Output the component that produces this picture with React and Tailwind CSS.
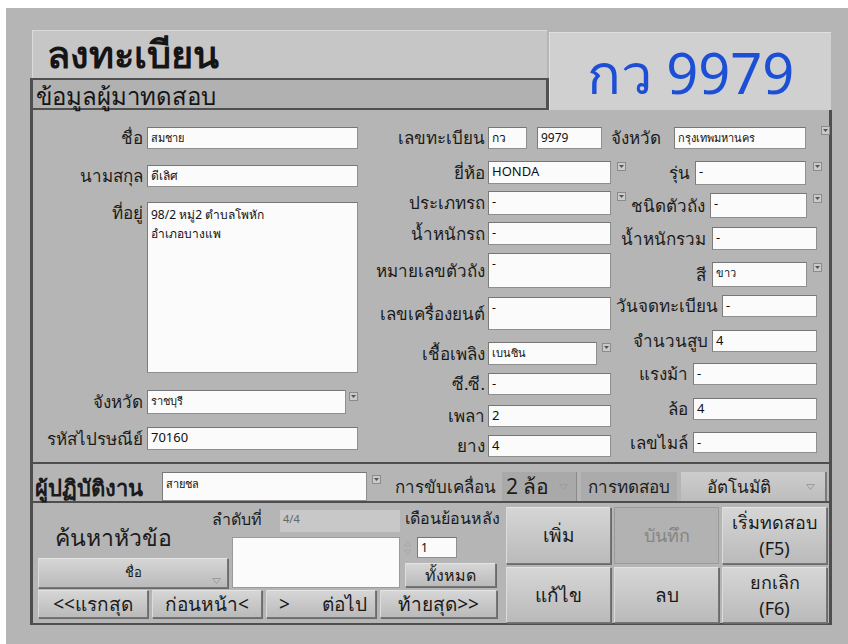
const ui = "font-['Noto_Sans','DejaVu_Sans',sans-serif]"

const boxCls =
  'shrink-0 h-full overflow-hidden whitespace-pre border border-[#8f8f8f] border-t-[#767676] border-l-[#7c7c7c] bg-[#fbfbfb] px-[3px] leading-[19px] text-[#111]'

const btnFace =
  'flex items-center border border-[#767676] border-t-[#e4e4e4] border-l-[#dcdcdc] bg-gradient-to-b from-[#d6d6d6] to-[#bababa] text-[#1a1a1a] shadow-[1px_1px_0_#6a6a6a]'
const btnCls = `${btnFace} justify-center`

// small square dropdown marker next to a text field
const Drop = ({ className = '' }) => (
  <span
    className={`flex h-[9px] w-[9px] shrink-0 items-center justify-center border border-[#8b8b8b] bg-[#cacaca] ${className}`}
  >
    <svg width="5" height="3" viewBox="0 0 5 3">
      <path d="M0 0h5L2.5 3z" fill="#555" />
    </svg>
  </span>
)

// thin down arrow used by the ring / enum controls
const Arrow = ({ className = '' }) => (
  <svg className={className} width="9" height="6" viewBox="0 0 9 6">
    <path d="M0.5 0.5h8L4.5 5.5z" fill="none" stroke="#9c9c9c" />
  </svg>
)

const LEFT = [
  { label: 'ชื่อ', value: 'สมชาย', row: 'mt-[17px] h-[22px] items-center', box: 'w-[211px]', v: 'text-[11px]' },
  { label: 'นามสกุล', value: 'ดีเลิศ', row: 'mt-[16px] h-[22px] items-center', box: 'w-[211px]', v: 'text-[12px]' },
  {
    label: 'ที่อยู่',
    value: '98/2 หมู่2 ตำบลโพหัก\nอำเภอบางแพ',
    row: 'mt-[15px] h-[171px] items-start',
    box: 'w-[211px]',
    v: 'text-[12px] leading-[16px] pt-[2px]',
  },
  {
    label: 'จังหวัด',
    value: 'ราชบุรี',
    row: 'mt-[17px] h-[24px] items-center',
    box: 'w-[199px]',
    v: 'text-[11px]',
    drop: 'ml-[3px] self-start mt-[2px]',
  },
  { label: 'รหัสไปรษณีย์', value: '70160', row: 'mt-[13px] h-[23px] items-center', box: 'w-[211px]' },
]

const MID = [
  {
    label: 'เลขทะเบียน',
    values: ['กว', '9979'],
    boxes: ['w-[39px]', 'w-[65px]'],
    row: 'mt-[17px] h-[22px] items-center',
    v: 'text-[12px]',
  },
  { label: 'ยี่ห้อ', value: 'HONDA', row: 'mt-[12px] h-[23px] items-center', box: 'w-[123px]', drop: 'ml-[6px] self-start mt-[1px]' },
  { label: 'ประเภทรถ', value: '-', row: 'mt-[7px] h-[24px] items-center', box: 'w-[123px]', drop: 'ml-[6px] self-start mt-[1px]' },
  { label: 'น้ำหนักรถ', value: '-', row: 'mt-[7px] h-[23px] items-center', box: 'w-[123px]' },
  { label: 'หมายเลขตัวถัง', value: '-', row: 'mt-[8px] h-[35px] items-center', box: 'w-[123px]', v: 'text-[12px] leading-[14px]' },
  { label: 'เลขเครื่องยนต์', value: '-', row: 'mt-[9px] h-[33px] items-center', box: 'w-[123px]', v: 'text-[12px] leading-[14px]' },
  {
    label: 'เชื้อเพลิง',
    value: 'เบนซิน',
    row: 'mt-[12px] h-[23px] items-center',
    box: 'w-[109px]',
    v: 'text-[11px]',
    drop: 'ml-[5px] self-start mt-[1px]',
  },
  { label: 'ซี.ซี.', value: '-', row: 'mt-[8px] h-[22px] items-center', box: 'w-[123px]' },
  { label: 'เพลา', value: '2', row: 'mt-[10px] h-[22px] items-center', box: 'w-[123px]' },
  { label: 'ยาง', value: '4', row: 'mt-[8px] h-[22px] items-center', box: 'w-[123px]' },
]

const RIGHT = [
  {
    label: 'จังหวัด',
    value: 'กรุงเทพมหานคร',
    row: 'mt-[17px] h-[22px] items-center',
    lab: 'w-[45px]',
    gap: 'ml-[18px]',
    box: 'w-[132px]',
    v: 'text-[11px]',
    drop: 'ml-[15px] self-start mt-[-1px]',
  },
  { label: 'รุ่น', value: '-', row: 'mt-[12px] h-[24px] items-center', lab: 'w-[79px]', gap: 'ml-[5px]', box: 'w-[111px]', drop: 'ml-[7px] self-start mt-[1px]' },
  { label: 'ชนิดตัวถัง', value: '-', row: 'mt-[8px] h-[25px] items-center', lab: 'w-[94px]', gap: 'ml-[5px]', box: 'w-[97px]', drop: 'ml-[6px] self-start mt-[1px]' },
  { label: 'น้ำหนักรวม', value: '-', row: 'mt-[9px] h-[23px] items-center', lab: 'w-[95px]', gap: 'ml-[6px]', box: 'w-[105px]' },
  {
    label: 'สี',
    value: 'ขาว',
    row: 'mt-[12px] h-[25px] items-center',
    lab: 'w-[95px]',
    gap: 'ml-[6px]',
    box: 'w-[95px]',
    v: 'text-[11px]',
    drop: 'ml-[6px] self-start mt-[1px]',
  },
  { label: 'วันจดทะเบียน', value: '-', row: 'mt-[8px] h-[22px] items-center', lab: 'w-[107px]', gap: 'ml-[4px]', box: 'w-[95px]' },
  { label: 'จำนวนสูบ', value: '4', row: 'mt-[13px] h-[22px] items-center', lab: 'w-[97px]', gap: 'ml-[4px]', box: 'w-[105px]' },
  { label: 'แรงม้า', value: '-', row: 'mt-[11px] h-[22px] items-center', lab: 'w-[77px]', gap: 'ml-[5px]', box: 'w-[124px]' },
  { label: 'ล้อ', value: '4', row: 'mt-[13px] h-[22px] items-center', lab: 'w-[77px]', gap: 'ml-[5px]', box: 'w-[124px]' },
  { label: 'เลขไมล์', value: '-', row: 'mt-[12px] h-[21px] items-center', lab: 'w-[77px]', gap: 'ml-[5px]', box: 'w-[124px]' },
]

function Field({ f, lab, gap }) {
  const values = f.values || [f.value]
  return (
    <div className={`flex shrink-0 ${f.row}`}>
      <span className={`shrink-0 whitespace-nowrap text-right text-[17px] leading-[22px] text-[#1b1b1b] ${f.lab || lab}`}>
        {f.label}
      </span>
      {values.map((v, i) => (
        <div
          key={i}
          className={`${boxCls} ${i ? 'ml-[10px]' : f.gap || gap} ${f.boxes ? f.boxes[i] : f.box} ${f.v || 'text-[13px]'}`}
        >
          {v}
        </div>
      ))}
      {f.drop && <Drop className={f.drop} />}
    </div>
  )
}

export default function App() {
  return (
    <div className={`h-[644px] w-[848px] overflow-hidden bg-white ${ui}`}>
      <div className="ml-[6px] mt-[8px] h-[636px] bg-[#b5b5b5] pl-[24px] pt-[22px]">
        {/* header: title, section tab and plate number */}
        <div className="flex h-[80px] w-[802px]">
          <div className="flex w-[519px] flex-col">
            <div className="mx-[2px] flex h-[48px] items-start border-l border-t border-[#dadada] bg-[#c6c6c6] pl-[14px]">
              <span className="text-[38px] font-bold leading-[44px] text-[#151515]">ลงทะเบียน</span>
            </div>
            <div className="flex h-[32px] items-end border-b-2 border-l-[3px] border-r-[3px] border-t-2 border-[#505050] bg-[#b1b1b1] pl-[3px]">
              <span className="text-[24px] leading-[25px] text-[#151515]">ข้อมูลผู้มาทดสอบ</span>
            </div>
          </div>
          <div className="mt-[2px] flex h-[78px] w-[282px] items-center justify-center border-l border-t border-[#e0e0e0] bg-[#d0d0d0] text-[56px] leading-none text-[#1c4fd6]">
            กว 9979
          </div>
        </div>

        <div className="w-[802px] border-b-2 border-l-[3px] border-r-[3px] border-[#4e4e4e] text-[#1b1b1b]">
          {/* vehicle and owner fields */}
          <div className="flex h-[354px] border-b-2 border-[#4e4e4e]">
            <div className="flex w-[325px] shrink-0 flex-col">
              {LEFT.map((f) => (
                <Field key={f.label} f={f} lab="w-[110px]" gap="ml-[4px]" />
              ))}
            </div>
            <div className="flex w-[253px] shrink-0 flex-col">
              {MID.map((f) => (
                <Field key={f.label} f={f} lab="w-[127px]" gap="ml-[3px]" />
              ))}
            </div>
            <div className="flex flex-col">
              {RIGHT.map((f) => (
                <Field key={f.label} f={f} />
              ))}
            </div>
          </div>

          {/* operator row */}
          <div className="flex h-[39px] items-center border-b-2 border-[#4e4e4e] pt-[8px]">
            <span className="ml-[2px] w-[122px] shrink-0 whitespace-nowrap text-[22px] font-bold leading-[28px]">ผู้ปฏิบัติงาน</span>
            <div className={`${boxCls} ml-[5px] h-[25px] w-[205px] text-[11px] leading-[22px]`}>สายชล</div>
            <Drop className="ml-[5px] mt-[-14px]" />
            <span className="ml-[14px] w-[104px] shrink-0 whitespace-nowrap text-[17px]">การขับเคลื่อน</span>
            <div className="ml-[3px] flex h-[29px] w-[75px] shrink-0 items-center border-r border-[#8a8a8a] bg-[#a9a9a9] pl-[4px] text-[21px]">
              <span className="flex-1 whitespace-nowrap">2 ล้อ</span>
              <Arrow className="mr-[8px]" />
            </div>
            <div className="ml-[4px] flex h-[29px] w-[96px] shrink-0 items-center justify-center bg-[#ababab] text-[17px]">
              การทดสอบ
            </div>
            <div className="ml-[4px] flex h-[29px] w-[146px] shrink-0 items-center border-r-2 border-[#7a7a7a] bg-gradient-to-b from-[#cdcdcd] to-[#bdbdbd] text-[17px]">
              <span className="ml-[26px] flex-1">อัตโนมัติ</span>
              <Arrow className="mr-[10px]" />
            </div>
          </div>

          {/* search, navigation and actions */}
          <div className="flex h-[120px]">
            <div className="flex w-[473px] shrink-0 flex-col">
              <div className="flex h-[85px]">
                <div className="ml-[5px] flex w-[190px] shrink-0 flex-col">
                  <span className="ml-[17px] mt-[21px] h-[26px] text-[23px] leading-[26px]">ค้นหาหัวข้อ</span>
                  <div className={`${btnCls} relative mt-[8px] h-[30px] text-[13px]`}>
                    ชื่อ
                    <Arrow className="absolute bottom-[3px] right-[6px]" />
                  </div>
                </div>
                <div className="ml-[4px] flex w-[168px] shrink-0 flex-col">
                  <div className="mt-[7px] flex h-[22px] items-start">
                    <span className="-ml-[20px] w-[58px] shrink-0 whitespace-nowrap text-[16px] leading-[18px]">ลำดับที่</span>
                    <div className="ml-[10px] h-[22px] w-[120px] shrink-0 bg-[#c8c8c8] px-[3px] text-[11px] leading-[18px] text-[#666]">4/4</div>
                  </div>
                  <div className="mt-[5px] h-[51px] w-[168px] border border-[#9a9a9a] bg-[#fbfbfb]" />
                </div>
                <div className="ml-[3px] flex w-[100px] shrink-0 flex-col">
                  <span className="ml-[2px] mt-[5px] h-[21px] whitespace-nowrap text-[16px] leading-[21px]">เดือนย้อนหลัง</span>
                  <div className="mt-[8px] flex h-[21px] items-center">
                    <svg width="9" height="20" viewBox="0 0 9 20">
                      <path d="M1.5 8L4.5 3l3 5z" fill="none" stroke="#a8a8a8" />
                      <path d="M1.5 12l3 5 3-5z" fill="none" stroke="#a8a8a8" />
                    </svg>
                    <div className={`${boxCls} ml-[5px] w-[40px] text-[12px] leading-[19px]`}>1</div>
                  </div>
                  <div className={`${btnCls} ml-[2px] mt-[5px] h-[24px] w-[91px] text-[16px]`}>ทั้งหมด</div>
                </div>
              </div>
              <div className="ml-[5px] mt-[2px] flex h-[28px] gap-[4px] text-[19px]">
                <div className={`${btnCls} w-[110px]`}>&lt;&lt;แรกสุด</div>
                <div className={`${btnCls} w-[110px]`}>ก่อนหน้า&lt;</div>
                <div className={`${btnFace} w-[110px] justify-between pl-[12px] pr-[8px]`}>
                  <span>&gt;</span>
                  <span>ต่อไป</span>
                </div>
                <div className={`${btnCls} w-[117px]`}>ท้ายสุด&gt;&gt;</div>
              </div>
            </div>

            <div className="mt-[4px] grid h-[116px] w-[321px] grid-cols-3 gap-[3px] text-center">
              <div className={`${btnCls} text-[19px]`}>เพิ่ม</div>
              <div className="flex items-center justify-center border border-[#9a9a9a] bg-[#b2b2b2] text-[18px] text-[#858585]">บันทึก</div>
              <div className={`${btnCls} flex-col text-[18px] leading-[26px]`}>
                <span>เริ่มทดสอบ</span>
                <span>(F5)</span>
              </div>
              <div className={`${btnCls} text-[19px]`}>แก้ไข</div>
              <div className={`${btnCls} text-[19px]`}>ลบ</div>
              <div className={`${btnCls} flex-col text-[18px] leading-[26px]`}>
                <span>ยกเลิก</span>
                <span>(F6)</span>
              </div>
            </div>
          </div>
        </div>
      </div>
    </div>
  )
}
